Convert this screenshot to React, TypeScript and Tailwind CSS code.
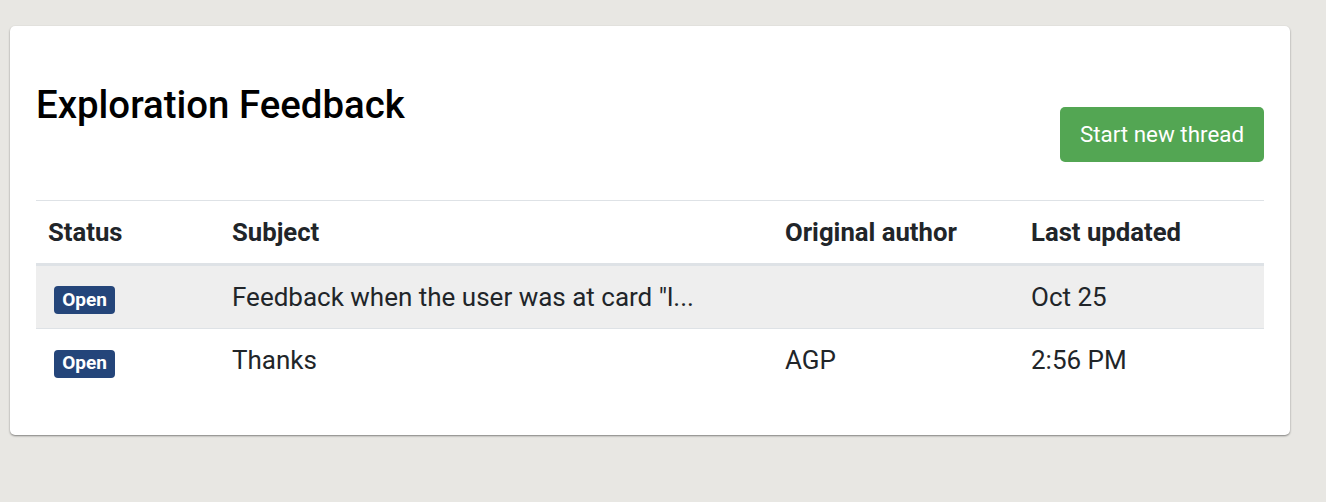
import React from "react";

const rows = [
  { status: "Open", subject: 'Feedback when the user was at card "l...', author: "", updated: "Oct 25", shaded: true },
  { status: "Open", subject: "Thanks", author: "AGP", updated: "2:56 PM", shaded: false },
];

export default function App() {
  return (
    <div
      className="min-h-[502px] w-full bg-[#e8e7e3] pt-[26px] pl-[10px]"
      style={{ fontFamily: "Roboto, 'Noto Sans', sans-serif" }}
    >
      <div className="w-[1280px] h-[409px] rounded-[5px] bg-white px-[26px] shadow-[0_1px_2px_rgba(0,0,0,0.45)]">
        <div className="flex h-[174px] items-start justify-between">
          <h1 className="mt-[56px] text-[38.4px] font-medium leading-[1.2] text-black">Exploration Feedback</h1>
          <button className="mt-[81px] h-[55px] w-[204px] rounded-[5px] bg-[#53a653] text-[22.4px] text-white">
            Start new thread
          </button>
        </div>
        <table className="w-full table-fixed border-collapse text-[26px] text-[#212529]">
          <colgroup>
            <col className="w-[184px]" />
            <col className="w-[553px]" />
            <col className="w-[246px]" />
            <col />
          </colgroup>
          <thead>
            <tr className="h-[64px] border-t border-b-[3px] border-t-[#dee2e6] border-b-[#dee2e6] text-[25.7px]">
              <th className="px-[12px] text-left font-bold">Status</th>
              <th className="px-[12px] text-left font-bold">Subject</th>
              <th className="px-[12px] text-left font-bold">Original author</th>
              <th className="px-[12px] text-left font-bold">Last updated</th>
            </tr>
          </thead>
          <tbody>
            {rows.map((r, i) => (
              <tr
                key={i}
                className={
                  r.shaded
                    ? "h-[64px] border-b border-[#dee2e6] bg-[#eeeeee]"
                    : "h-[64px]"
                }
              >
                <td className="px-[12px]">
                  <span className="ml-[6px] mt-[4px] inline-flex h-[28px] w-[61px] items-center justify-center rounded-[4px] bg-[#24457a] text-[19px] font-bold text-white">
                    {r.status}
                  </span>
                </td>
                <td className="px-[12px] whitespace-nowrap">{r.subject}</td>
                <td className="px-[12px]">{r.author}</td>
                <td className="px-[12px]">{r.updated}</td>
              </tr>
            ))}
          </tbody>
        </table>
      </div>
    </div>
  );
}
